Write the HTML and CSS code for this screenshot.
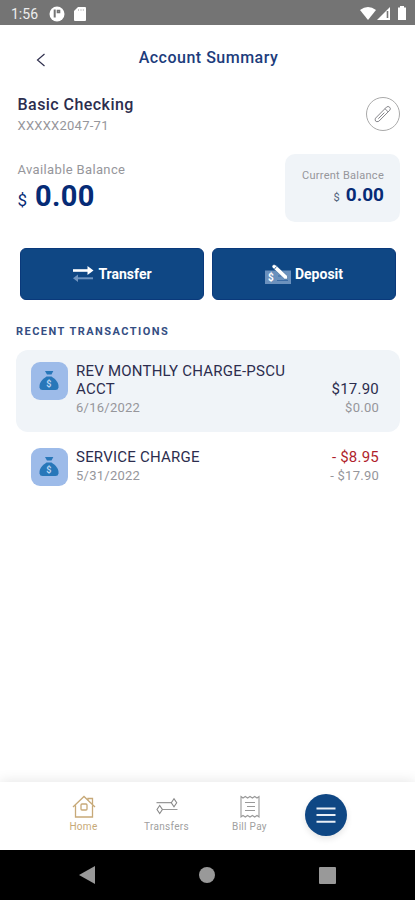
FILE: index.html
```html
<!DOCTYPE html>
<html lang="en">
<head>
<meta charset="utf-8">
<meta name="viewport" content="width=device-width, initial-scale=1">
<title>Account Summary</title>
<link rel="stylesheet" href="styles.css">
</head>
<body>
<div class="phone">
  <div class="status">
    <span class="clock">1:56</span>
    <svg class="app-dot" width="16" height="16" viewBox="0 0 16 16"><circle cx="8" cy="8" r="7.500" fill="#fff"/><path d="M5.700 3.500v8" stroke="#747474" stroke-width="2"/><path d="M8.500 4.500h2v2h-2z" fill="none" stroke="#747474" stroke-width="1.600"/></svg>
    <svg class="sd" width="12" height="14" viewBox="0 0 12 14"><path d="M4 0h7a1 1 0 0 1 1 1v12a1 1 0 0 1-1 1H1a1 1 0 0 1-1-1V4z" fill="#fff"/><path d="M4.500 2v2M7 2v2M9.300 2v2" stroke="#bbb" stroke-width=".8"/></svg>
    <svg class="signals" width="48" height="16" viewBox="0 0 48 16"><path d="M0 4Q8-2 16 4L8 14z" fill="#fff"/><path d="M30 1v13H17z" fill="#fff"/><path d="M27.500 5v7" stroke="#747474" stroke-width="1.600"/><path d="M40 0h4v1.500h2V14h-8V1.500h2z" fill="#fff"/></svg>
  </div>

  <header class="top">
    <svg class="back" width="10" height="14" viewBox="0 0 10 14"><path d="M8.500 1L1.500 7l7 6" fill="none" stroke="#30304e" stroke-width="1.200"/></svg>
    <h1>Account Summary</h1>
  </header>

  <section class="account">
    <div>
      <h2>Basic Checking</h2>
      <p class="number">XXXXX2047-71</p>
    </div>
    <div class="edit"><svg width="18" height="18" viewBox="0 0 18 18"><path d="M1.500 13.200L12.600 2q1.500-1.200 3 .2t.2 3L4.800 16.300q-2.300.9-3.200-.2t-.1-2.900zM11 3.700l3.300 3.300M4.300 13.700l6-6" fill="none" stroke="#85858a" stroke-width="1"/></svg></div>
  </section>

  <section class="balances">
    <div class="available">
      <p>Available Balance</p>
      <div class="amount"><span>$</span><strong>0.00</strong></div>
    </div>
    <div class="current">
      <p>Current Balance</p>
      <div class="amount"><span>$</span><strong>0.00</strong></div>
    </div>
  </section>

  <div class="actions">
    <div class="button"><svg width="22" height="16" viewBox="0 0 22 16"><path d="M1 4.500h16" stroke="#fff" stroke-width="2.600"/><path d="M15.500 0l6 4.500-6 4.500z" fill="#fff"/><path d="M5 12.300h16" stroke="#6f94c0" stroke-width="2"/><path d="M6 8.500v7.500L1 12.300z" fill="#6f94c0"/></svg><span>Transfer</span></div>
    <div class="button"><svg width="26" height="20" viewBox="0 0 26 20"><path d="M0 6.500h26V20H0z" fill="#6b91bd"/><path d="M12 16.500h11M13 12h3" stroke="#3c6ca5" stroke-width="1.200"/><text x="3" y="17" class="dollar">$</text><path d="M7 3q-.2-2 2-2.500l2.200 1L22.500 12v3h-3L8.500 4.500z" fill="#fff" stroke="#124782" stroke-width=".4"/><path d="M9.500 5l2-2.500" stroke="#124782" stroke-width=".8"/></svg><span>Deposit</span></div>
  </div>

  <h3>RECENT TRANSACTIONS</h3>
  <div class="transactions">
    <div class="row shaded">
      <div class="tile"><svg width="20" height="22" viewBox="0 0 20 22"><path d="M6 1h8.300L12.500 4.500H8z" fill="#2877b9"/><path d="M7.500 6.500h5C17 9.500 20 13 19.500 17.500q-.3 2.500-3 2.500h-13Q.8 20 .5 17.500C0 13 3 9.500 7.500 6.500z" fill="#2877b9"/><text x="7.300" y="17" class="bag-dollar">$</text></svg></div>
      <div class="desc"><p>REV MONTHLY CHARGE-PSCU ACCT</p><small>6/16/2022</small></div>
      <div class="money"><p>$17.90</p><small>$0.00</small></div>
    </div>
    <div class="row">
      <div class="tile"><svg width="20" height="22" viewBox="0 0 20 22"><path d="M6 1h8.300L12.500 4.500H8z" fill="#2877b9"/><path d="M7.500 6.500h5C17 9.500 20 13 19.500 17.500q-.3 2.500-3 2.500h-13Q.8 20 .5 17.500C0 13 3 9.500 7.500 6.500z" fill="#2877b9"/><text x="7.300" y="17" class="bag-dollar">$</text></svg></div>
      <div class="desc"><p>SERVICE CHARGE</p><small>5/31/2022</small></div>
      <div class="money"><p class="debit">- $8.95</p><small>- $17.90</small></div>
    </div>
  </div>

  <nav class="tabs">
    <div class="tab home"><svg width="24" height="24" viewBox="0 0 24 24"><path d="M1 12L12 1.500 23 12M3.500 10.500v11.500h17V10.500M16 5V3.500h4.500v6" fill="none" stroke="#c7a978" stroke-width="1.300"/><rect x="9" y="9" width="6" height="6" rx="1" fill="none" stroke="#c7a978" stroke-width="1.300"/></svg><span>Home</span></div>
    <div class="tab"><svg width="24" height="24" viewBox="0 0 24 24"><path d="M1.500 7.700H16M7.500 14.500h15" stroke="#999" stroke-width="1.200"/><path d="M16.300 7.700l2.700-4 2.700 4-2.700 4zM2 14.500l2.700-4 2.700 4-2.700 4z" fill="none" stroke="#888" stroke-width="1.100"/></svg><span>Transfers</span></div>
    <div class="tab"><svg width="24" height="24" viewBox="0 0 24 24"><path d="M3 1.500l2 1.500 2.300-1.500L9.600 3 12 1.500 14.400 3l2.300-1.500L19 3l2-1.500v20.500l-2-1.500-2.300 1.500-2.300-1.500L12 22l-2.400-1.500L7.300 22 5 20.500 3 22z" fill="none" stroke="#999" stroke-width="1.100"/><path d="M7 7.500h10M9 11.500h8M7 15.500h10" stroke="#999" stroke-width="1.100"/></svg><span>Bill Pay</span></div>
    <div class="menu"><svg width="20" height="18" viewBox="0 0 20 18"><path d="M.5 2.500h19M.5 9h19M.5 15.700h19" stroke="#e9eff6" stroke-width="1.900"/></svg></div>
  </nav>

  <div class="system">
    <svg width="16" height="18" viewBox="0 0 16 18"><path d="M16 0v18L0 9z" fill="#999"/></svg>
    <svg width="16" height="16" viewBox="0 0 16 16"><circle cx="8" cy="8" r="8" fill="#999"/></svg>
    <svg width="17" height="17" viewBox="0 0 17 17"><rect width="17" height="17" rx="1" fill="#999"/></svg>
  </div>
</div>
</body>
</html>
```
FILE: styles.css
```css
* { box-sizing: border-box; }
body { margin: 0; background: #fff; font-family: Roboto, sans-serif; color: #2c2d4e; }
h1, h2, h3, p { margin: 0; font-weight: 400; }
svg { display: block; flex: none; }
.phone { width: 415px; height: 900px; display: flex; flex-direction: column; overflow: hidden; }

.status { height: 25px; flex: none; background: #747474; display: flex; align-items: center; padding: 2px 7px 0 11px; }
.clock { width: 38px; color: #eee; font-size: 14px; line-height: 16px; }
.sd { margin-left: 9px; }
.signals { margin-left: auto; }

.top { height: 65px; flex: none; display: grid; grid-template-columns: 46px 1fr 44px; align-items: center; }
.back { justify-self: end; margin-top: 4px; }
.top h1 { text-align: center; font-size: 16px; font-weight: 500; letter-spacing: .5px; color: #1c3c7c; }

.account { height: 64px; flex: none; display: flex; justify-content: space-between; padding: 4px 15px 0 17.5px; }
.account h2 { font-size: 16px; line-height: 21px; font-weight: 500; letter-spacing: .45px; }
.number { font-size: 13px; line-height: 21px; letter-spacing: .25px; color: #96969b; }
.edit { width: 34px; height: 34px; margin-top: 3px; border: 1px solid #aaa; border-radius: 50%; display: grid; place-items: center; }

.balances { height: 68px; flex: none; display: flex; justify-content: space-between; padding: 0 15px 0 17.5px; }
.available p { padding-top: 6px; font-size: 13px; line-height: 20px; letter-spacing: .36px; color: #96969b; }
.amount { display: flex; align-items: baseline; color: #062b76; }
.available .amount { gap: 8px; line-height: 32px; }
.available span { font-size: 17px; }
.available strong { font-size: 29px; font-weight: 700; letter-spacing: .3px; }
.current { width: 115px; height: 68px; padding: 14px 16px; border-radius: 10px; background: #f0f4f8; }
.current p { font-size: 11px; line-height: 16px; letter-spacing: .27px; text-align: right; white-space: nowrap; color: #96969b; }
.current .amount { justify-content: flex-end; gap: 6px; line-height: 22px; }
.current span { font-size: 11px; color: #4d5f78; }
.current strong { font-size: 19px; font-weight: 700; }

.actions { height: 52px; flex: none; display: grid; grid-template-columns: 1fr 1fr; gap: 8px; margin: 26px 19px 0 20px; }
.button { display: flex; align-items: center; justify-content: center; gap: 4px; padding-bottom: 1px; border-radius: 6px; background: #0f4784; border: 1px solid #0a397b; color: #fff; font-size: 14px; font-weight: 700; }
.dollar { font: 700 10px Roboto, sans-serif; fill: #fff; }

h3 { height: 50px; flex: none; padding: 22px 0 0 16px; font-size: 11px; line-height: 20px; font-weight: 700; letter-spacing: 1.46px; color: #344e83; }
.transactions { margin: 0 15px 0 16px; }
.row { display: flex; padding: 12px 21px 14px 14.5px; border-radius: 12px; }
.row.shaded { height: 82px; background: #f0f4f8; }
.row:last-child { padding-top: 16px; }
.tile { width: 37.5px; height: 37.5px; flex: none; display: grid; place-items: center; border-radius: 9px; background: #9dbbe9; }
.bag-dollar { font: 700 9px Roboto, sans-serif; fill: #b9d5f2; }
.desc { width: 225px; margin-left: 8px; }
.row p { font-size: 15px; line-height: 18px; letter-spacing: .22px; }
.row small { display: block; font-size: 13px; line-height: 20px; letter-spacing: .25px; color: #96969b; }
.money { margin-left: auto; align-self: flex-start; text-align: right; white-space: nowrap; }
.shaded .money { padding-top: 18px; }
.row .debit { color: #b01f2c; }

.tabs { height: 68px; flex: none; margin-top: auto; display: flex; padding-left: 42px; background: #fff; box-shadow: 0 -1px 12px rgba(0,0,0,.1); }
.tab { width: 83px; display: flex; flex-direction: column; align-items: center; padding-top: 13px; font-size: 10px; line-height: 16px; letter-spacing: .3px; color: #a0a0a0; }
.home { color: #c7a978; }
.menu { width: 42px; height: 42px; margin: 12px 0 0 14px; border-radius: 50%; display: grid; place-items: center; background: #0f4784; box-shadow: 0 3px 6px rgba(0,0,0,.1); }
.system { height: 50px; flex: none; display: flex; align-items: center; gap: 104px; padding-left: 79px; background: #000; }
```
